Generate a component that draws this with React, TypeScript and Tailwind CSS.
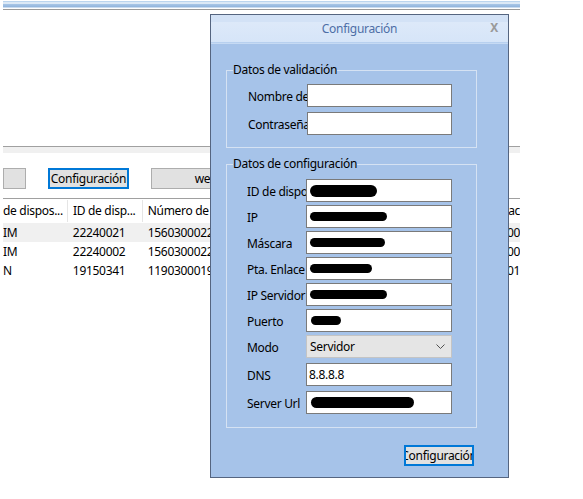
import React from "react";

const font = { fontFamily: '"Segoe UI", "Noto Sans", "Open Sans", sans-serif' };

function Blob({ w, h, ml = 1 }: { w: number; h: number; ml?: number }) {
  return (
    <svg width={w + ml} height={h} className="shrink-0">
      <rect x={ml} y={0} width={w} height={h} rx={h / 2} fill="#000" />
    </svg>
  );
}

function Field({
  label,
  children,
  mt = "mt-[3px]",
  inputW = "w-[146px]",
}: {
  label: string;
  children?: React.ReactNode;
  mt?: string;
  inputW?: string;
}) {
  return (
    <div className={`flex items-center ${mt}`}>
      <div className="w-[59px] overflow-hidden whitespace-nowrap pt-[2px] text-[12px] leading-[16px] text-black">
        {label}
      </div>
      <div className={`flex h-[23px] ${inputW} items-center border border-[#7a7a7a] bg-white px-[2px] text-[12px] text-black`}>
        {children}
      </div>
    </div>
  );
}

export default function App() {
  const rows = [
    { a: "IM", b: "22240021", c: "156030002222", d: "00", sel: true },
    { a: "IM", b: "22240002", c: "156030002222", d: "00", sel: false },
    { a: "N", b: "19150341", c: "119030001911", d: "01", sel: false },
  ];

  return (
    <div className="relative h-[499px] w-[583px] overflow-hidden bg-white tracking-[-0.3px]" style={font}>
      {/* background window */}
      <div className="ml-[3px] w-[517px]">
        <div className="h-[1px]" />
        <div className="h-[1px] bg-[#bcd5ee]" />
        <div className="h-[2px] bg-[#dce9f6]" />
        <div className="h-[3px] bg-gradient-to-b from-[#a9c7e7] to-[#91b4dd]" />
        <div className="h-[1px] bg-[#c9dbef]" />
        <div className="h-[1px] bg-white" />
        <div className="h-[1px] bg-[#9a9a9a]" />

        <div className="h-[136px]" />
        <div className="h-[1px] bg-[#a0a0a0]" />
        <div className="h-[6px] bg-[#f0f0f0]" />

        {/* toolbar buttons */}
        <div className="mt-[15px] flex h-[21px] items-stretch">
          <div className="w-[23px] border border-[#adadad] bg-[#e1e1e1]" />
          <div className="ml-[22px] flex w-[81px] items-center justify-center border-2 border-[#0078d7] bg-[#e1e1e1] text-[12px] text-black">
            Configuración
          </div>
          <div className="ml-[22px] flex w-[110px] items-center justify-center border border-[#adadad] bg-[#e1e1e1] text-[12px] text-black">
            web
          </div>
        </div>

        {/* table */}
        <div className="mt-[9px] h-[1px] bg-[#a0a0a0]" />
        <div className="flex h-[24px] items-center text-[12px] text-black">
          <div className="w-[64px] overflow-hidden whitespace-nowrap">de dispos...</div>
          <div className="h-[22px] w-[1px] bg-[#e5e5e5]" />
          <div className="w-[74px] overflow-hidden whitespace-nowrap pl-[5px]">ID de disp...</div>
          <div className="h-[22px] w-[1px] bg-[#e5e5e5]" />
          <div className="w-[360px] overflow-hidden whitespace-nowrap pl-[5px]">Número de</div>
          <div className="overflow-hidden whitespace-nowrap pl-[6px]">ac</div>
        </div>
        {rows.map((r, i) => (
          <div
            key={i}
            className={`flex h-[19px] items-center text-[12px] text-black ${r.sel ? "bg-[#f0f0f0]" : ""}`}
          >
            <div className="w-[65px] overflow-hidden whitespace-nowrap">{r.a}</div>
            <div className="w-[75px] overflow-hidden whitespace-nowrap pl-[5px]">{r.b}</div>
            <div className="w-[360px] overflow-hidden whitespace-nowrap pl-[5px]">{r.c}</div>
            <div className="overflow-hidden whitespace-nowrap pl-[5px]">{r.d}</div>
          </div>
        ))}
      </div>

      {/* dialog */}
      <div className="absolute left-[210px] top-[14px] flex h-[464px] w-[299px] flex-col border border-[#556580] bg-[#a6c3e9]">
        <div className="h-[7px] bg-[#d3e2f6]" />
        <div className="flex h-[20px] items-center bg-gradient-to-b from-[#dde9f9] to-[#d6e5f8]">
          <div className="w-[28px]" />
          <div className="-mt-[6px] flex-1 text-center text-[12px] text-[#4d6ea6]">Configuración</div>
          <div className="-mt-[9px] w-[28px] text-center text-[12px] font-bold text-[#9a9a9a]">X</div>
        </div>
        <div className="h-[1px] bg-[#b7d0ef]" />
        <div className="h-[1px] bg-[#c6daf3]" />

        <div className="flex flex-1 flex-col px-[15px]">
          {/* group 1 */}
          <fieldset className="mt-[18px] w-[251px] border border-[#d5e2f3] p-0">
            <legend className="ml-[6px] px-0 text-[12px] leading-[16px] text-black">Datos de validación</legend>
            <div className="pb-[12px] pl-[21px]">
              <Field label="Nombre de usuario" mt="mt-[6px]" inputW="w-[145px]" />
              <Field label="Contraseña" mt="mt-[5px]" inputW="w-[145px]" />
            </div>
          </fieldset>

          {/* group 2 */}
          <fieldset className="mt-[8px] w-[251px] border border-[#d5e2f3] p-0">
            <legend className="ml-[6px] px-0 text-[12px] leading-[16px] text-black">Datos de configuración</legend>
            <div className="pb-[13px] pl-[20px]">
              <Field label="ID de dispositivo" mt="mt-[7px]">
                <Blob w={67} h={12} />
              </Field>
              <Field label="IP">
                <Blob w={77} h={9} ml={1} />
              </Field>
              <Field label="Máscara">
                <Blob w={75} h={9} />
              </Field>
              <Field label="Pta. Enlace">
                <Blob w={62} h={9} ml={1} />
              </Field>
              <Field label="IP Servidor">
                <Blob w={77} h={9} />
              </Field>
              <Field label="Puerto">
                <Blob w={30} h={9} ml={2} />
              </Field>
              <div className="mt-[3px] flex items-center">
                <div className="w-[59px] pt-[2px] text-[12px] leading-[16px] text-black">Modo</div>
                <div className="flex h-[23px] w-[146px] items-center justify-between border border-[#c4c4c4] bg-[#e5e5e5] pl-[3px] pr-[6px] text-[12px] text-black">
                  <span>Servidor</span>
                  <svg width="9" height="6" viewBox="0 0 9 6">
                    <polyline points="0.5,0.5 4.5,4.5 8.5,0.5" fill="none" stroke="#505050" strokeWidth="1" />
                  </svg>
                </div>
              </div>
              <Field label="DNS" mt="mt-[5px]">
                8.8.8.8
              </Field>
              <Field label="Server Url" mt="mt-[5px]">
                <Blob w={103} h={11} ml={2} />
              </Field>
            </div>
          </fieldset>

          <div className="mt-[17px] flex justify-end pr-[19px]">
            <div className="flex h-[21px] w-[70px] items-center justify-center overflow-hidden whitespace-nowrap border-2 border-[#0078d7] bg-[#e1e1e1] text-[12px] text-black">
              Configuración
            </div>
          </div>
        </div>
      </div>
    </div>
  );
}
